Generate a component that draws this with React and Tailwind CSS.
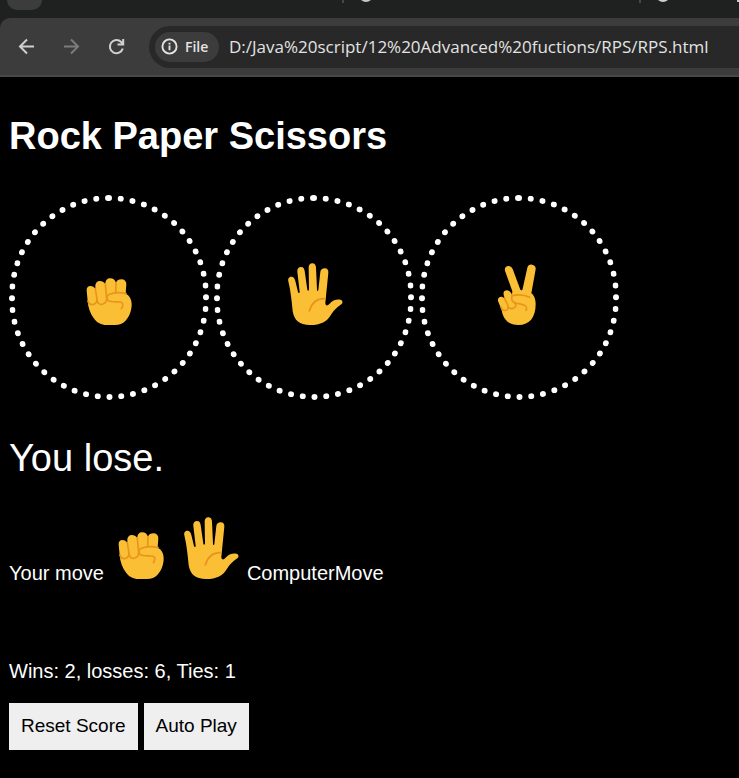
import React from "react";

const SKIN = "#fbbf36";
const LINE = "#e8951c";

function Rock() {
  return (
    <svg className="inline-block size-16 shrink-0" viewBox="21 22 192 192" fill="none" aria-label="rock" role="img">
      <path
        d="M50 108C49 99 54 94 61 94C68 94 73 97 76 103V92C77 84 82 79 89 79C97 79 102 82 106 88C106 77 112 71 121 71C129 71 135 75 138 84C141 77 146 74 154 74C164 74 169 80 169 89L167 117C178 121 185 134 185 149C185 169 178 186 166 199C158 207 149 211 134 211H110C93 211 81 204 73 193C61 178 54 158 53 139Z"
        fill={SKIN}
      />
      <g stroke={LINE} strokeWidth="5" strokeLinecap="round" strokeLinejoin="round">
        <path d="M54 139C56 150 66 152 75 147C80 144 82 139 81 133L76 103" />
        <path d="M81 136C83 148 91 151 99 148C106 145 110 140 110 132L106 89" />
        <path d="M138 86L137 112M168 117C152 113 130 114 118 119C109 123 108 135 117 139C124 142 137 141 150 142C160 143 161 153 154 162" />
      </g>
    </svg>
  );
}

function Paper() {
  return (
    <svg className="inline-block size-16 shrink-0" viewBox="21 22 192 192" fill="none" aria-label="paper" role="img">
      <path
        d="M40 80C38 71 43 66 49 66C56 66 59 71 61 79L69 112C70 116 74 116 74 111L67 51C66 43 71 37 78 37C85 37 88 42 89 49L97 105C98 109 102 109 102 104L101 39C101 31 105 26 112 26C119 26 123 32 123 39L126 105C126 110 129 111 130 106L136 52C137 45 142 41 149 41C157 41 161 47 160 54L151 144C151 153 157 155 163 148C172 137 185 133 196 135C204 137 204 145 199 149C184 159 176 168 168 180C157 200 137 211 105 211C73 211 58 198 53 170C50 138 47 109 40 80Z"
        fill={SKIN}
      />
      <path d="M150 132C125 131 110 144 103 169" stroke={LINE} strokeWidth="5" strokeLinecap="round" />
    </svg>
  );
}

function Scissors() {
  return (
    <svg className="inline-block size-16 shrink-0" viewBox="21 22 192 192" fill="none" aria-label="scissors" role="img">
      <path
        d="M75 48C73 40 78 34 85 34C91 34 95 37 98 43L120 102C122 108 127 108 128 102L142 39C144 32 149 29 156 30C164 31 168 36 167 44L154 116C163 122 167 136 167 148C167 187 150 211 115 211C86 211 69 194 65 166L54 139C52 131 58 125 65 126C69 127 72 129 74 132L71 120C69 112 74 107 81 107C88 108 92 112 96 120L97 110Z"
        fill={SKIN}
      />
      <g stroke={LINE} strokeWidth="5" strokeLinecap="round" strokeLinejoin="round">
        <path d="M64 159C67 170 79 169 84 163C88 158 83 151 74 132" />
        <path d="M84 157C91 164 101 163 106 156C110 151 107 147 103 143" />
        <path d="M96 123C114 119 133 120 149 128M96 123C93 134 97 142 107 145C120 149 135 148 139 157C141 161 140 164 138 167" />
      </g>
    </svg>
  );
}

function BrowserChrome() {
  return (
    <header className="bg-[#1f2120] font-['Open_Sans','Noto_Sans',sans-serif]">
      <div className="flex h-[18px] items-start">
        <div className="ml-[7px] h-[10px] w-[35px] rounded-b-full bg-[#3c3c3c]" />
        <div className="ml-[300px] h-[3px] w-[2px] bg-[#474747]" />
        <svg className="ml-[17px] h-[2px] w-[10px]" viewBox="0 0 10 2" fill="#c3c8d0">
          <path d="M0 0H10Q5 4 0 0Z" />
        </svg>
        <div className="ml-[268px] h-[3px] w-[2px] bg-[#474747]" />
        <svg className="ml-[17px] h-[2px] w-[10px]" viewBox="0 0 10 2" fill="#d0d0d0">
          <path d="M0 0H10Q5 4 0 0Z" />
        </svg>
        <div className="ml-auto h-[2px] w-[2px] bg-[#c8c8c8]" />
      </div>
      <div className="flex h-[59px] items-center rounded-tl-[10px] border-b-2 border-[#484848] bg-[#3c3c3c]">
        <button type="button" aria-label="Back" className="ml-[16px] size-5 text-[#d0d0d0]">
          <svg viewBox="0 0 20 20" className="size-5" fill="none" stroke="currentColor" strokeWidth="2">
            <path d="M18 9.500H4.500M11 2.500L4 9.500L11 16.500" />
          </svg>
        </button>
        <button type="button" aria-label="Forward" className="ml-[25px] size-5 text-[#7c7c7c]">
          <svg viewBox="0 0 20 20" className="size-5" fill="none" stroke="currentColor" strokeWidth="2">
            <path d="M3 9.500H16.500M10 2.500L17 9.500L10 16.500" />
          </svg>
        </button>
        <button type="button" aria-label="Reload" className="ml-[25px] size-5 text-[#d0d0d0]">
          <svg viewBox="0 0 20 20" className="size-5" fill="none" stroke="currentColor" strokeWidth="2">
            <path d="M16.800 11.500A6.600 6.600 0 1 1 15.200 5L17 7M17.200 2V7.500H11.500" />
          </svg>
        </button>
        <div className="ml-[23px] flex h-[42px] min-w-0 flex-1 items-center rounded-l-full bg-[#282828] pl-[6px]">
          <button type="button" className="flex h-[30px] w-16 shrink-0 items-center gap-[7px] rounded-full bg-[#3c3c3c] pl-[6px] text-[14px] leading-5 font-semibold text-[#e3e3e3]">
            <svg viewBox="0 0 18 18" className="size-[17px] shrink-0" fill="none" stroke="currentColor" strokeWidth="2">
              <circle cx="9" cy="9" r="7.500" />
              <path d="M9 8V13M9 5V7" />
            </svg>
            File
          </button>
          <input
            type="text"
            aria-label="Address"
            readOnly
            value="D:/Java%20script/12%20Advanced%20fuctions/RPS/RPS.html"
            className="ml-[10px] min-w-0 flex-1 bg-transparent text-[17px] leading-6 text-[#e3e3e3] outline-none"
          />
        </div>
      </div>
    </header>
  );
}

function MoveButton({ label, children }) {
  return (
    <button
      type="button"
      aria-label={label}
      className="flex h-[205px] w-[200px] items-center justify-center rounded-full border-[6px] border-dotted border-white pb-2"
    >
      {children}
    </button>
  );
}

export default function App() {
  return (
    <div className="min-h-screen bg-black font-['Liberation_Sans',Arial,sans-serif] text-xl text-white">
      <BrowserChrome />
      <main className="px-[9px] pt-[37px] pb-7">
        <h1 className="text-[38px] leading-[44px] font-bold">Rock Paper Scissors</h1>
        <div className="mt-[37px] flex flex-wrap gap-[5px]">
          <MoveButton label="Play rock"><Rock /></MoveButton>
          <MoveButton label="Play paper"><Paper /></MoveButton>
          <MoveButton label="Play scissors"><Scissors /></MoveButton>
        </div>
        <p className="mt-9 text-[38px] leading-[44px]">You lose.</p>
        <p className="mt-9 flex items-baseline gap-[5px]">
          Your move
          <Rock />
          <Paper />
          ComputerMove
        </p>
        <p className="mt-[72px] leading-6">Wins: 2, losses: 6, Ties: 1</p>
        <div className="mt-5 flex gap-[6px]">
          <button type="button" className="h-[47px] bg-[#efefef] px-3 text-[19px] text-black">Reset Score</button>
          <button type="button" className="h-[47px] bg-[#efefef] px-3 text-[19px] text-black">Auto Play</button>
        </div>
      </main>
    </div>
  );
}
